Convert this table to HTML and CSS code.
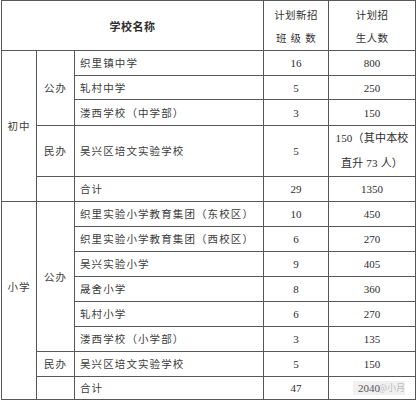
FILE: index.html
```html
<!DOCTYPE html>
<html lang="zh">
<head>
<meta charset="utf-8">
<link rel="stylesheet" href="styles.css">
</head>
<body>
<div class="wrap">
<table class="plan">
  <colgroup>
    <col class="c1"><col class="c2"><col class="c3"><col class="c4"><col class="c5">
  </colgroup>
  <tr class="h50">
    <th colspan="3" class="title">学校名称</th>
    <th class="hd">计划新招<br>班&nbsp;级&nbsp;数</th>
    <th class="hd">计划招<br>生人数</th>
  </tr>
  <tr class="h25">
    <td rowspan="5" class="grp">初中</td>
    <td rowspan="3" class="kind">公办</td>
    <td class="name">织里镇中学</td><td class="num">16</td><td class="num">800</td>
  </tr>
  <tr class="h24"><td class="name">轧村中学</td><td class="num">5</td><td class="num">250</td></tr>
  <tr class="h26"><td class="name">溇西学校（中学部）</td><td class="num">3</td><td class="num">150</td></tr>
  <tr class="h49">
    <td class="kind">民办</td>
    <td class="name">吴兴区培文实验学校</td><td class="num">5</td>
    <td class="num multi">150（其中本校<br>直升 73 人）</td>
  </tr>
  <tr class="h25"><td class="kind"></td><td class="name">合计</td><td class="num">29</td><td class="num">1350</td></tr>
  <tr class="h25">
    <td rowspan="8" class="grp low">小学</td>
    <td rowspan="6" class="kind">公办</td>
    <td class="name">织里实验小学教育集团（东校区）</td><td class="num">10</td><td class="num">450</td>
  </tr>
  <tr class="h25"><td class="name">织里实验小学教育集团（西校区）</td><td class="num">6</td><td class="num">270</td></tr>
  <tr class="h25"><td class="name">吴兴实验小学</td><td class="num">9</td><td class="num">405</td></tr>
  <tr class="h25"><td class="name">晟舍小学</td><td class="num">8</td><td class="num">360</td></tr>
  <tr class="h25"><td class="name">轧村小学</td><td class="num">6</td><td class="num">270</td></tr>
  <tr class="h25"><td class="name">溇西学校（小学部）</td><td class="num">3</td><td class="num">135</td></tr>
  <tr class="h25"><td class="kind">民办</td><td class="name">吴兴区培文实验学校</td><td class="num">5</td><td class="num">150</td></tr>
  <tr class="h23"><td class="kind"></td><td class="name">合计</td><td class="num">47</td>
    <td class="num"><span class="wm-host"><span class="wm">@小月</span><span class="val">2040</span></span></td></tr>
</table>
</div>
</body>
</html>
```
FILE: styles.css
```css
html, body {
  margin: 0;
  padding: 0;
  background: #ffffff;
}
.wrap {
  padding: 0 0 0 1px;
  width: 415px;
}
.plan {
  border-collapse: collapse;
  table-layout: fixed;
  width: 414px;
  font-family: "Noto Sans CJK SC", "Liberation Serif", serif;
  font-size: 10.5px;
  color: #3c3c3c;
}
.c1 { width: 35px; }
.c2 { width: 38px; }
.c3 { width: 189px; }
.c4 { width: 65px; }
.c5 { width: 87px; }
.plan th, .plan td {
  border: 1px solid #585858;
  padding: 0;
  vertical-align: middle;
  line-height: 14px;
  font-weight: normal;
}
.h50 { height: 50px; }
.h49 { height: 49px; }
.h26 { height: 26px; }
.h25 { height: 25px; }
.h24 { height: 24px; }
.h23 { height: 23px; }
.title {
  font-weight: bold !important;
  font-size: 11px;
  letter-spacing: 0.5px;
  text-align: center;
  color: #2e2e2e;
}
.hd {
  text-align: center;
  line-height: 23px !important;
  letter-spacing: 0.4px;
  word-spacing: 1px;
  color: #333;
}
.grp, .kind {
  text-align: center;
  letter-spacing: 1px;
}
.grp.low {
  padding-bottom: 28px !important;
}
.name {
  text-align: left;
  padding-left: 5px !important;
  letter-spacing: 1.1px;
  white-space: nowrap;
}
.num {
  text-align: center;
  font-family: "Liberation Serif", "Noto Sans CJK SC", serif;
  font-size: 11px;
  color: #2e2e2e;
}
.multi {
  line-height: 25px !important;
  letter-spacing: 0.2px;
}
.wm-host {
  position: relative;
  display: inline-block;
  margin-left: -6px;
}
.val {
  position: relative;
  z-index: 1;
  color: #555;
}
.wm {
  position: absolute;
  left: -5px;
  right: -25px;
  top: 0;
  bottom: 0;
  text-align: right;
  white-space: nowrap;
  font-family: "Noto Sans CJK SC", sans-serif;
  font-size: 9px;
  color: #bdbdbd;
  background: rgba(0, 0, 0, 0.06);
  z-index: 0;
}
```
